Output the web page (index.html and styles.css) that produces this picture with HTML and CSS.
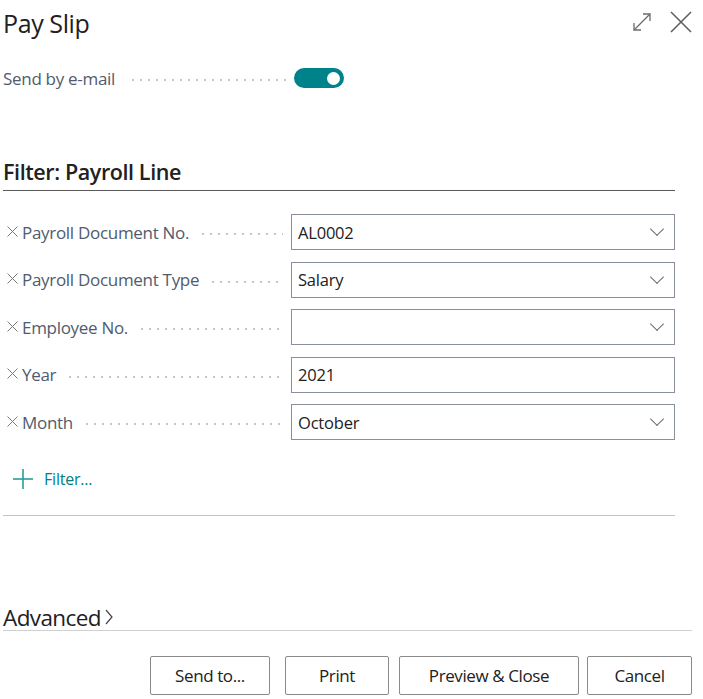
FILE: index.html
```html
<!DOCTYPE html>
<html lang="en">
<head>
<meta charset="utf-8">
<title>Pay Slip</title>
<link rel="stylesheet" href="styles.css">
</head>
<body>
<div class="dialog">
  <header class="titlebar">
    <h1 class="title">Pay Slip</h1>
    <div class="title-actions">
      <button class="icon-btn" aria-label="Expand">
        <svg width="20" height="20" viewBox="0 0 20 20" fill="none" stroke="#6b6b6b" stroke-width="1.3">
          <path d="M2 18 L18 2"/>
          <path d="M11 2 H18 V9"/>
          <path d="M2 11 V18 H9"/>
        </svg>
      </button>
      <button class="icon-btn" aria-label="Close">
        <svg width="22" height="22" viewBox="0 0 22 22" fill="none" stroke="#5f5f5f" stroke-width="1.6">
          <path d="M1 1 L21 21"/>
          <path d="M21 1 L1 21"/>
        </svg>
      </button>
    </div>
  </header>

  <div class="toggle-row">
    <span class="label">Send by e-mail</span>
    <span class="leader"></span>
    <span class="toggle"><span class="knob"></span></span>
  </div>

  <section class="filter">
    <h2 class="section-title">Filter: Payroll Line</h2>
    <div class="rows">
      <div class="row">
        <div class="row-label"><svg class="remove" width="11" height="11" viewBox="0 0 11 11"><path d="M0.5 0.5 L10.5 10.5 M10.5 0.5 L0.5 10.5"/></svg><span class="label">Payroll Document No.</span><span class="leader"></span></div>
        <div class="input"><span class="value">AL0002</span><span class="chevron"></span></div>
      </div>
      <div class="row">
        <div class="row-label"><svg class="remove" width="11" height="11" viewBox="0 0 11 11"><path d="M0.5 0.5 L10.5 10.5 M10.5 0.5 L0.5 10.5"/></svg><span class="label">Payroll Document Type</span><span class="leader"></span></div>
        <div class="input"><span class="value">Salary</span><span class="chevron"></span></div>
      </div>
      <div class="row">
        <div class="row-label"><svg class="remove" width="11" height="11" viewBox="0 0 11 11"><path d="M0.5 0.5 L10.5 10.5 M10.5 0.5 L0.5 10.5"/></svg><span class="label">Employee No.</span><span class="leader"></span></div>
        <div class="input"><span class="value"></span><span class="chevron"></span></div>
      </div>
      <div class="row">
        <div class="row-label"><svg class="remove" width="11" height="11" viewBox="0 0 11 11"><path d="M0.5 0.5 L10.5 10.5 M10.5 0.5 L0.5 10.5"/></svg><span class="label">Year</span><span class="leader"></span></div>
        <div class="input"><span class="value">2021</span></div>
      </div>
      <div class="row">
        <div class="row-label"><svg class="remove" width="11" height="11" viewBox="0 0 11 11"><path d="M0.5 0.5 L10.5 10.5 M10.5 0.5 L0.5 10.5"/></svg><span class="label">Month</span><span class="leader"></span></div>
        <div class="input"><span class="value">October</span><span class="chevron"></span></div>
      </div>
    </div>
    <a class="add-filter" href="#">
      <svg width="22" height="22" viewBox="0 0 22 22" fill="none" stroke="#2a9d9c" stroke-width="1.6">
        <path d="M11 1 V21"/>
        <path d="M1 11 H21"/>
      </svg>
      <span>Filter...</span>
    </a>
  </section>

  <div class="separator"></div>

  <div class="advanced">
    <span class="advanced-text">Advanced</span>
    <svg width="10" height="18" viewBox="0 0 10 18" fill="none" stroke="#444" stroke-width="1.2">
      <path d="M2 2 L8 9 L2 16"/>
    </svg>
  </div>

  <footer class="actions">
    <button class="btn btn-send">Send to...</button>
    <button class="btn btn-print">Print</button>
    <button class="btn btn-preview">Preview &amp; Close</button>
    <button class="btn btn-cancel">Cancel</button>
  </footer>
</div>
</body>
</html>
```
FILE: styles.css
```css
* { box-sizing: border-box; }

html, body {
  margin: 0;
  padding: 0;
  background: #fff;
}

body {
  font-family: "Open Sans", "Noto Sans", "Liberation Sans", sans-serif;
  color: #212121;
  width: 703px;
  height: 699px;
  overflow: hidden;
}

.dialog {
  display: flex;
  flex-direction: column;
  padding: 0 11px 0 3px;
}

.titlebar {
  display: flex;
  align-items: center;
  justify-content: space-between;
  height: 46px;
}

.title {
  margin: 0;
  font-size: 25px;
  font-weight: 400;
  letter-spacing: -0.4px;
  color: #212121;
  line-height: 46px;
}

.title-actions {
  display: flex;
  align-items: center;
  gap: 18px;
  margin-top: -2px;
}

.icon-btn {
  border: 0;
  background: none;
  padding: 0;
  display: flex;
}

.toggle-row {
  display: flex;
  align-items: center;
  height: 20px;
  margin-top: 22px;
  width: 341px;
}

.label {
  font-size: 17px;
  color: #505c6d;
  white-space: nowrap;
  letter-spacing: -0.3px;
}

.leader {
  flex: 1;
  height: 4px;
  margin: 4px 8px 0 14px;
  background-image: radial-gradient(circle, #c6c6c6 0.9px, transparent 1.3px);
  background-size: 8px 4px;
  background-repeat: repeat-x;
}

.toggle {
  width: 50px;
  height: 20px;
  border-radius: 10px;
  background: #00828a;
  display: flex;
  align-items: center;
  justify-content: flex-end;
  padding-right: 4px;
}

.knob {
  width: 13px;
  height: 13px;
  border-radius: 50%;
  background: #fff;
}

.filter {
  margin-top: 70px;
  width: 672px;
}

.section-title {
  margin: 0;
  font-size: 21.5px;
  font-weight: 600;
  line-height: 28px;
  letter-spacing: -0.4px;
  color: #212121;
  padding-bottom: 4px;
  border-bottom: 1px solid #5b5b5b;
}

.rows {
  display: flex;
  flex-direction: column;
  gap: 11.5px;
  margin-top: 23px;
}

.row {
  display: flex;
  align-items: center;
}

.row-label {
  display: flex;
  align-items: center;
  width: 288px;
  padding-left: 4px;
}

.remove {
  fill: none;
  stroke: #7a7a7a;
  stroke-width: 1;
  margin-right: 4px;
  flex: none;
  margin-top: -2px;
}

.row-label .leader {
  margin-left: 10px;
}

.input {
  width: 384px;
  height: 36px;
  border: 1px solid #8a9099;
  display: flex;
  align-items: center;
  justify-content: space-between;
  padding: 0 9px 0 6px;
}

.value {
  font-size: 16.5px;
  color: #212121;
  letter-spacing: -0.2px;
}

.chevron {
  width: 10px;
  height: 10px;
  border-right: 1px solid #6e6e6e;
  border-bottom: 1px solid #6e6e6e;
  transform: rotate(45deg);
  margin-top: -6px;
  margin-right: 3px;
}

.add-filter {
  display: flex;
  align-items: center;
  gap: 10px;
  margin-top: 27px;
  margin-left: 9px;
  height: 24px;
  text-decoration: none;
  color: #00807f;
  font-size: 16px;
  letter-spacing: -0.2px;
}

.separator {
  margin-top: 24px;
  width: 672px;
  height: 1px;
  background: #c4c4c4;
}

.advanced {
  display: flex;
  align-items: center;
  gap: 3px;
  margin-top: 87px;
  padding-bottom: 0;
  border-bottom: 1px solid #d0d0d0;
  height: 28px;
}

.advanced-text {
  font-size: 22.5px;
  letter-spacing: -0.6px;
  color: #212121;
  line-height: 28px;
  margin-top: 2px;
}

.actions {
  display: flex;
  justify-content: flex-end;
  margin-top: 25px;
}

.btn {
  height: 39px;
  border: 1px solid #8a8a8a;
  border-radius: 2px;
  background: #fff;
  font-family: "Open Sans", "Noto Sans", "Liberation Sans", sans-serif;
  font-size: 17px;
  color: #212121;
  letter-spacing: -0.4px;
  padding: 0;
}

.btn-send { width: 120px; }
.btn-print { width: 104px; margin-left: 15px; }
.btn-preview { width: 180px; margin-left: 10px; }
.btn-cancel { width: 105px; margin-left: 8px; }
```
